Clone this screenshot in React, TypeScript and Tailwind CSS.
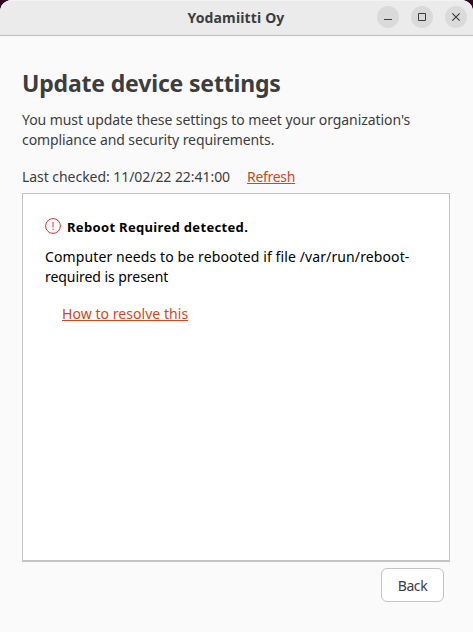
import React from "react";

function WindowButton({ label, children }: { label: string; children: React.ReactNode }) {
  return (
    <button aria-label={label} className="h-[22px] w-[22px] rounded-full bg-[#dadada]">
      <svg width="22" height="22" viewBox="0 0 22 22" fill="none" stroke="#3d3d3d">
        {children}
      </svg>
    </button>
  );
}

function TitleBar() {
  return (
    <header className="grid h-9 grid-cols-[1fr_auto_1fr] items-center rounded-t-xl border-b border-[#bfbfbf] bg-[#ebebeb] shadow-[inset_0_1px_#f3f3f3]">
      <span />
      <h1 className="mr-[1px] whitespace-nowrap text-[14px] font-bold leading-5 tracking-[0.15px] text-[#3d3d3d]">Yodamiitti Oy</h1>
      <div className="-mt-px flex justify-end gap-3 pr-[6px]">
        <WindowButton label="Minimize">
          <path d="M7 13.5h8" />
        </WindowButton>
        <WindowButton label="Maximize">
          <path d="M7.5 7.5h7v7h-7z" />
        </WindowButton>
        <WindowButton label="Close">
          <path d="M7.3 7.3l7.4 7.4M14.7 7.3l-7.4 7.4" strokeWidth="1.2" />
        </WindowButton>
      </div>
    </header>
  );
}

export default function App() {
  return (
    <div className="h-[632px] w-[473px] bg-[#300a24] font-['Noto_Sans',sans-serif] text-[14px] leading-5 text-[#3d3d3d]">
      <div className="flex h-full flex-col rounded-t-xl bg-[#fafafa]">
        <TitleBar />
        <main className="flex flex-1 flex-col pl-[22px] pr-[23px] pt-[31px]">
          <h2 className="whitespace-nowrap text-[23px] font-bold leading-8 tracking-[-0.17px]">Update device settings</h2>
          <p className="mt-[11px] whitespace-nowrap">
            <span className="tracking-[-0.065px]">You must update these settings to meet your organization's</span>
            <br />
            <span className="tracking-[-0.09px]">compliance and security requirements.</span>
          </p>
          <div className="mt-[17px] flex whitespace-nowrap">
            <span className="w-[225px] tracking-[-0.05px]">Last checked: 11/02/22 22:41:00</span>
            <a className="tracking-[-0.3px] text-[#cc491c] underline">Refresh</a>
          </div>
          <section className="mt-[6px] h-[369px] border border-b-2 border-[#c4c4c4] bg-white pl-[22px] pt-[23px] text-black">
            <div className="flex items-start gap-[6px]">
              <svg className="mt-px" width="16" height="16" viewBox="0 0 16 16" fill="none" stroke="#da3237">
                <circle cx="8" cy="8" r="7.4" />
                <path d="M8 4v5.5M8 10.7v1.3" />
              </svg>
              <strong className="whitespace-nowrap text-[13px] font-bold tracking-[0.33px]">Reboot Required detected.</strong>
            </div>
            <p className="mt-[10px] whitespace-nowrap">
              <span className="tracking-[0.11px]">Computer needs to be rebooted if file /var/run/reboot-</span>
              <br />
              <span className="tracking-[-0.05px]">required is present</span>
            </p>
            <a className="ml-[17px] mt-[17px] block w-fit whitespace-nowrap tracking-[0.05px] text-[#cc491c] underline">How to resolve this</a>
          </section>
          <button className="mr-[6px] mt-[6px] h-[34px] w-[63px] self-end rounded-md border border-[#c4c4c4] bg-white pt-px tracking-[-0.4px]">Back</button>
        </main>
      </div>
    </div>
  );
}
